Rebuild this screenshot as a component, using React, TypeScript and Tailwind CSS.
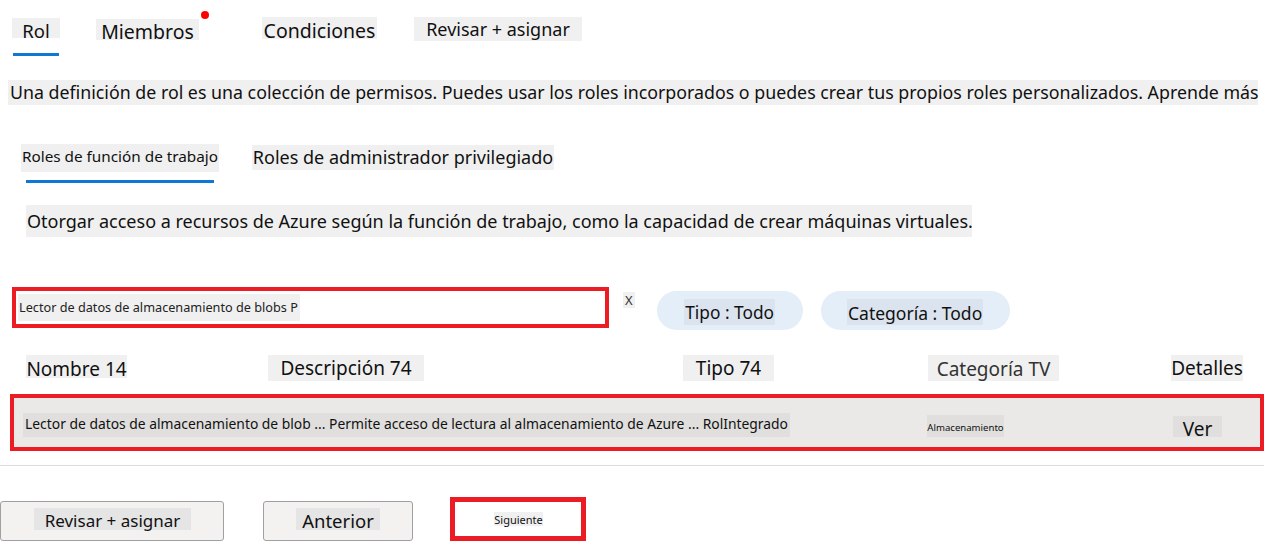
import React from "react";

const Box = ({ className = "", children }: { className?: string; children: React.ReactNode }) => (
  <span className={"inline-block bg-[#f0f0f0] whitespace-nowrap " + className}>{children}</span>
);

const App = () => {
  return (
    <div className="w-[1264px] h-[541px] overflow-hidden bg-white text-[#111] font-['Noto_Sans',sans-serif]">
      {/* main tabs */}
      <div className="flex items-start pt-[17px] h-[56px] text-[19.5px]">
        <div className="ml-[12px] mt-[1px] flex flex-col">
          <Box className="w-[48px] h-[20px] leading-[25px] text-center text-[18.5px]">Rol</Box>
          <div className="ml-[1px] mt-[15px] w-[46px] h-[3px] bg-[#0f78d4]" />
        </div>
        <div className="relative ml-[36px]">
          <Box className="w-[103px] h-[21px] leading-[25px] text-center">Miembros</Box>
          <span className="absolute left-[105px] -top-[6px] w-[8px] h-[8px] rounded-full bg-[#f00]" />
        </div>
        <Box className="ml-[63px] w-[115px] h-[22px] leading-[27px] text-center">Condiciones</Box>
        <Box className="ml-[37px] w-[168px] h-[24px] leading-[25px] text-center text-[18px]">Revisar + asignar</Box>
      </div>

      {/* description */}
      <div className="mt-[24px] ml-[8px]">
        <Box className="w-[1250px] h-[25px] leading-[25px] pl-[2px] text-[17.8px]">
          Una definición de rol es una colección de permisos. Puedes usar los roles incorporados o puedes crear tus propios roles personalizados. Aprende más
        </Box>
      </div>

      {/* sub tabs */}
      <div className="mt-[39px] flex items-start h-[62px]">
        <div className="ml-[21px] flex flex-col">
          <Box className="w-[198px] h-[28px] leading-[25px] text-center text-[15.3px]">Roles de función de trabajo</Box>
          <div className="ml-[5px] mt-[8px] w-[188px] h-[3px] bg-[#0f78d4]" />
        </div>
        <Box className="ml-[33px] mt-[1px] w-[302px] h-[25px] leading-[25px] text-center text-[18px]">
          Roles de administrador privilegiado
        </Box>
      </div>

      {/* grant text */}
      <div className="mt-[-1px] ml-[26px]">
        <Box className="w-[946px] h-[32px] leading-[32px] pl-[1px] text-[18px]">
          Otorgar acceso a recursos de Azure según la función de trabajo, como la capacidad de crear máquinas virtuales.
        </Box>
      </div>

      {/* filter row */}
      <div className="mt-[50px] flex items-start h-[68px]">
        <div className="ml-[12px] w-[597px] h-[41px] border-[4px] border-[#ec1c24] flex items-center">
          <Box className="ml-[2px] h-[27px] leading-[27px] pl-[1px] pr-[2px] text-[12.7px] text-[#222]">
            Lector de datos de almacenamiento de blobs P
          </Box>
        </div>
        <Box className="ml-[14px] mt-[5px] h-[16px] leading-[16px] px-[2px] text-[13px] text-[#333]">X</Box>
        <div className="ml-[22px] mt-[4px] w-[146px] h-[39px] rounded-full bg-[#e3eef9] flex items-center justify-center">
          <span className="bg-[#dae3ee] h-[26px] leading-[28px] px-[1px] text-[17.3px] mt-[2px]">Tipo : Todo</span>
        </div>
        <div className="ml-[18px] mt-[4px] w-[189px] h-[39px] rounded-full bg-[#e3eef9] flex items-center justify-center">
          <span className="bg-[#dae3ee] h-[26px] leading-[28px] px-[1px] text-[17.5px] mt-[2px]">Categoría : Todo</span>
        </div>
      </div>

      {/* table header */}
      <div className="flex items-start h-[39px] text-[19px]">
        <Box className="ml-[26px] w-[101px] h-[23px] leading-[28px] text-center">Nombre 14</Box>
        <Box className="ml-[141px] w-[156px] h-[26px] leading-[26px] text-center">Descripción 74</Box>
        <Box className="ml-[259px] w-[91px] h-[26px] leading-[26px] text-center">Tipo 74</Box>
        <Box className="ml-[154px] w-[131px] h-[26px] leading-[28px] text-center text-[#333]">Categoría TV</Box>
        <Box className="ml-[112px] w-[72px] h-[26px] leading-[27px] text-center">Detalles</Box>
      </div>

      {/* row */}
      <div className="ml-[10px] w-[1254px] h-[57px] border-[4px] border-[#ec1c24] bg-[#eae9e7] flex items-start pt-[15px]">
        <span className="ml-[9px] w-[767px] bg-[#e0dfdd] h-[24px] leading-[22px] text-center text-[13.85px] whitespace-nowrap">
          Lector de datos de almacenamiento de blob ... Permite acceso de lectura al almacenamiento de Azure ... RolIntegrado
        </span>
        <span className="ml-[137px] mt-[2px] w-[77px] bg-[#e0dfdd] h-[22px] leading-[26px] text-center text-[9.6px] whitespace-nowrap">
          Almacenamiento
        </span>
        <span className="ml-[169px] mt-[3px] w-[49px] bg-[#e0dfdd] h-[21px] leading-[26px] text-center text-[19px]">
          Ver
        </span>
      </div>

      <div className="mt-[14px] h-px bg-[#dcdcdc]" />

      {/* footer buttons */}
      <div className="mt-[31px] flex items-start">
        <div className="w-[224px] h-[40px] mt-[4px] rounded-[3px] border border-[#a0a0a0] bg-[#f3f2f1] flex items-start">
          <span className="ml-[33px] mt-[6px] w-[157px] bg-[#e5e5e5] h-[22px] leading-[26px] text-center text-[17px]">Revisar + asignar</span>
        </div>
        <div className="ml-[39px] mt-[4px] w-[150px] h-[40px] rounded-[3px] border border-[#a0a0a0] bg-[#f3f2f1] flex items-start">
          <span className="ml-[32px] mt-[6px] w-[84px] bg-[#e5e5e5] h-[22px] leading-[26px] text-center text-[18.5px]">Anterior</span>
        </div>
        <div className="ml-[37px] w-[136px] h-[44px] border-[5px] border-[#ec1c24] bg-white flex items-start">
          <span className="ml-[39px] mt-[10px] w-[49px] bg-[#f0f0f0] h-[14px] leading-[15px] text-center text-[11px]">Siguiente</span>
        </div>
      </div>
    </div>
  );
};

export default App;
